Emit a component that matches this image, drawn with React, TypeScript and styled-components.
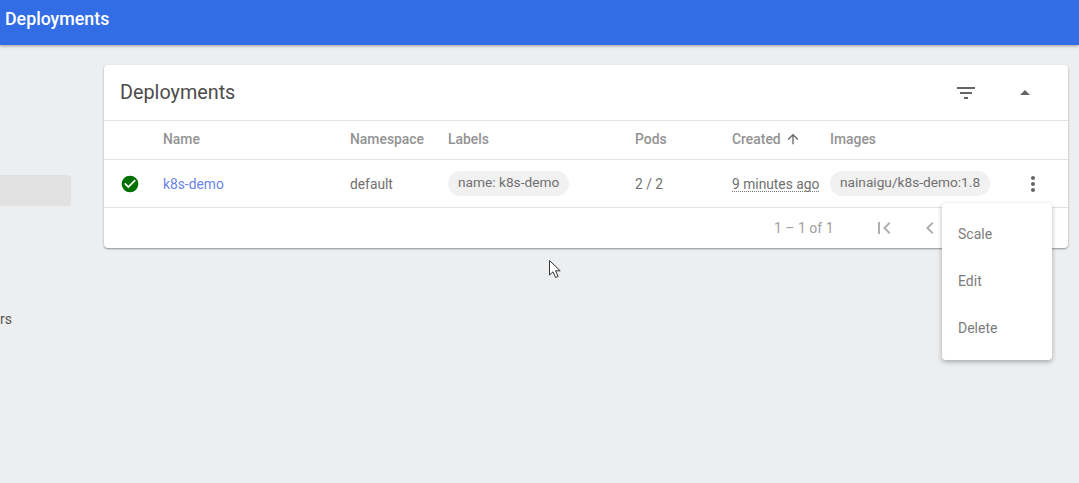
import styled, { createGlobalStyle } from 'styled-components'

const GlobalStyle = createGlobalStyle`
  html, body {
    margin: 0;
    height: 100%;
    background: #edeef0;
    font-family: Roboto, "Liberation Sans", sans-serif;
    overflow: hidden;
  }
`

const COLUMNS = '59px 187px 98px 187px 97px 98px 187px 1fr'

const Page = styled.div`
  position: relative;
  width: 1079px;
  height: 483px;
  overflow: hidden;
`
const Toolbar = styled.header`
  height: 45px;
  background: #326de6;
  box-shadow: 0 1px 3px rgba(0, 0, 0, 0.35);
  color: #fff;
  font-size: 17.8px;
  font-weight: 500;
  line-height: 38px;
  padding-left: 5px;
`
const Body = styled.div`
  display: flex;
  align-items: flex-start;
`
const SideNav = styled.nav`
  width: 71px;
  flex: none;
  margin-right: 33px;
  padding-top: 130px;
  font-size: 14px;
  color: #555;
`
const NavActive = styled.div`
  height: 31px;
  background: #e1e1e1;
  border-radius: 0 3px 3px 0;
`
const NavItem = styled.div`
  margin-top: 103px;
  line-height: 20px;
`
const Main = styled.main`
  width: 964px;
  padding-top: 20px;
`
const Card = styled.section`
  background: #fff;
  border-radius: 4px;
  box-shadow: 0 1px 2px rgba(0, 0, 0, 0.4);
  height: 183px;
  display: flex;
  flex-direction: column;
`
const CardHeader = styled.div`
  height: 55px;
  display: flex;
  align-items: center;
  padding-left: 16px;
  border-bottom: 1px solid #e2e2e2;
  flex: none;
`
const Title = styled.h2`
  flex: 1;
  margin: 0;
  font-size: 19.8px;
  line-height: 24px;
  font-weight: 400;
  color: #4c4c4c;
`
const HeaderIcon = styled.svg<{ $right: number }>`
  width: 24px;
  height: 24px;
  fill: #666;
  margin-right: ${(p) => p.$right}px;
  flex: none;
`
const TableRow = styled.div`
  display: grid;
  grid-template-columns: ${COLUMNS};
  align-items: center;
  border-bottom: 1px solid #e2e2e2;
  flex: none;
`
const HeadRow = styled(TableRow)`
  padding-bottom: 2px;
  height: 36px;
  font-size: 13.9px;
  font-weight: 500;
  color: #939393;
`
const DataRow = styled(TableRow)`
  height: 47px;
  font-size: 13.8px;
  color: #707070;
`
const SortIcon = styled.svg`
  width: 16px;
  height: 16px;
  fill: #666;
  margin-left: 4px;
  vertical-align: -3px;
`
const StatusCell = styled.div`
  padding-left: 16px;
  display: flex;
`
const NameLink = styled.a`
  color: #6a84e8;
`
const Chip = styled.span`
  display: inline-block;
  height: 25px;
  line-height: 23px;
  padding: 0 10px;
  border-radius: 13px;
  background: #f1f1f1;
  font-size: 13.7px;
  color: #707070;
  white-space: nowrap;
`
const Age = styled.span`
  border-bottom: 1px dotted #777;
  line-height: 14px;
  display: inline-block;
  white-space: nowrap;
`
const Kebab = styled.svg`
  width: 24px;
  height: 24px;
  fill: #666;
  display: block;
  margin-left: 4px;
`
const Pager = styled.div`
  flex: 1;
  display: flex;
  align-items: center;
  padding-left: 670px;
  font-size: 14px;
  color: #a0a0a0;
`
const PagerIcon = styled.svg<{ $left: number }>`
  width: 24px;
  height: 24px;
  fill: #b0b0b0;
  margin-left: ${(p) => p.$left}px;
  flex: none;
`
const Menu = styled.ul`
  position: absolute;
  left: 942px;
  top: 203px;
  width: 110px;
  height: 157px;
  margin: 0;
  padding: 8px 0;
  box-sizing: border-box;
  list-style: none;
  background: #fff;
  border-radius: 4px;
  box-shadow: 0 2px 5px rgba(0, 0, 0, 0.3);
`
const MenuItem = styled.li`
  height: 47px;
  line-height: 47px;
  padding-left: 16px;
  font-size: 14px;
  color: #7c7c7c;
`
const Cursor = styled.svg`
  position: absolute;
  left: 548px;
  top: 259px;
  width: 14px;
  height: 20px;
`

export default function App() {
  return (
    <Page>
      <GlobalStyle />
      <Toolbar>Deployments</Toolbar>
      <Body>
        <SideNav>
          <NavActive />
          <NavItem>rs</NavItem>
        </SideNav>
        <Main>
          <Card>
            <CardHeader>
              <Title>Deployments</Title>
              <HeaderIcon $right={35} viewBox="0 0 24 24">
                <path d="M10 18h4v-2h-4v2zM3 6v2h18V6H3zm3 7h12v-2H6v2z" />
              </HeaderIcon>
              <HeaderIcon $right={31} viewBox="0 0 24 24">
                <path d="M7 14l5-5 5 5z" />
              </HeaderIcon>
            </CardHeader>
            <HeadRow>
              <span />
              <span>Name</span>
              <span>Namespace</span>
              <span>Labels</span>
              <span>Pods</span>
              <span>
                Created
                <SortIcon viewBox="0 0 24 24">
                  <path d="M4 12l1.41 1.41L11 7.83V20h2V7.83l5.58 5.59L20 12l-8-8-8 8z" />
                </SortIcon>
              </span>
              <span>Images</span>
              <span />
            </HeadRow>
            <DataRow>
              <StatusCell>
                <svg width="20" height="20" viewBox="0 0 24 24">
                  <circle cx="12" cy="12" r="10" fill="#007000" />
                  <path fill="#fff" d="M10 17l-5-5 1.41-1.41L10 14.17l7.59-7.59L19 8l-9 9z" />
                </svg>
              </StatusCell>
              <NameLink>k8s-demo</NameLink>
              <span>default</span>
              <span>
                <Chip>name: k8s-demo</Chip>
              </span>
              <span>2 / 2</span>
              <span>
                <Age>9 minutes ago</Age>
              </span>
              <span>
                <Chip>nainaigu/k8s-demo:1.8</Chip>
              </span>
              <span>
                <Kebab viewBox="0 0 24 24">
                  <path d="M12 8c1.1 0 2-.9 2-2s-.9-2-2-2-2 .9-2 2 .9 2 2 2zm0 2c-1.1 0-2 .9-2 2s.9 2 2 2 2-.9 2-2-.9-2-2-2zm0 6c-1.1 0-2 .9-2 2s.9 2 2 2 2-.9 2-2-.9-2-2-2z" />
                </Kebab>
              </span>
            </DataRow>
            <Pager>
              <span>1 – 1 of 1</span>
              <PagerIcon $left={38} viewBox="0 0 24 24">
                <path d="M18.41 16.59L13.82 12l4.59-4.59L17 6l-6 6 6 6zM6 6h2v12H6z" />
              </PagerIcon>
              <PagerIcon $left={22} viewBox="0 0 24 24">
                <path d="M15.41 7.41L14 6l-6 6 6 6 1.41-1.41L10.83 12z" />
              </PagerIcon>
            </Pager>
          </Card>
        </Main>
      </Body>
      <Menu>
        <MenuItem>Scale</MenuItem>
        <MenuItem>Edit</MenuItem>
        <MenuItem>Delete</MenuItem>
      </Menu>
      <Cursor viewBox="0 0 14 20">
        <path d="M1.5 1.5v14.5l3.5-3.2 2.6 5.7 2.5-1.1-2.6-5.6h4.7z" fill="#fff" stroke="#333" strokeWidth="1" />
      </Cursor>
    </Page>
  )
}
